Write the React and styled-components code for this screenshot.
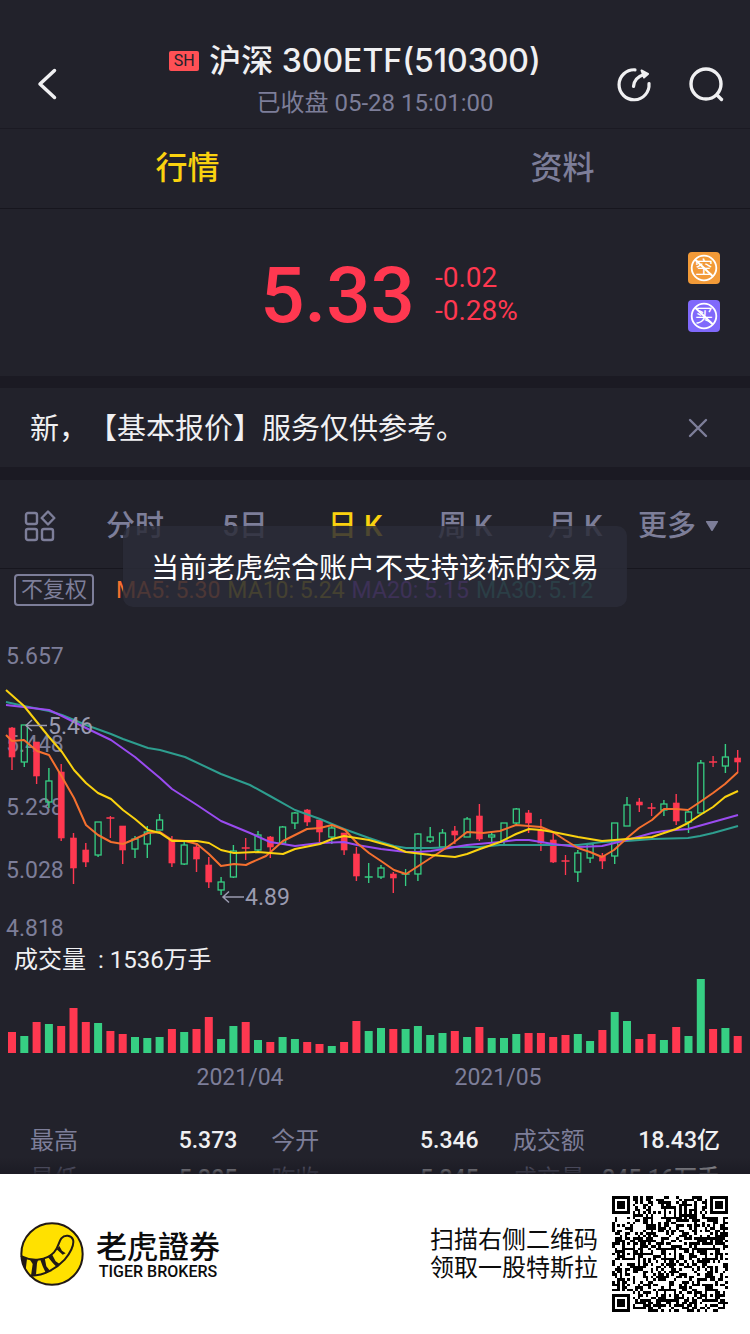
import React from "react";
import styled, { createGlobalStyle } from "styled-components";

const color = {
  bg: "#22222b",
  gap: "#1b1a23",
  muted: "#7d7e99",
  text: "#f0f0f2",
  yellow: "#fad20f",
  red: "#ff3850",
  green: "#36cf83",
  orange: "#f5702f",
  purple: "#9a4bf0",
  teal: "#2e9e8f",
};

const GlobalStyle = createGlobalStyle`
  *, *::before, *::after { box-sizing: border-box; }
  body {
    margin: 0;
    background: ${color.bg};
    color: ${color.text};
    font-family: Roboto, "Noto Sans CJK SC", sans-serif;
  }
  button { font: inherit; color: inherit; background: none; border: 0; padding: 0; cursor: pointer; }
  h1, p, dl, dt, dd { margin: 0; font-weight: 400; }
  svg { display: block; }
`;

const Page = styled.div`
  min-height: 100vh;
  display: flex;
  flex-direction: column;
`;

const Header = styled.header`
  display: grid;
  grid-template-columns: 130px 1fr 130px;
  align-items: center;
  padding-top: 40px;
  height: 129px;
  border-bottom: 1px solid ${color.gap};
`;

const BackButton = styled.button`
  justify-self: start;
  padding-left: 36px;
`;

const HeaderActions = styled.div`
  display: flex;
  justify-content: flex-end;
  gap: 36px;
  padding-right: 26px;
`;

const Heading = styled.div`
  display: flex;
  flex-direction: column;
  align-items: center;
  gap: 8px;
  padding-bottom: 10px;
  white-space: nowrap;
`;

const TitleRow = styled.div`
  display: flex;
  align-items: center;
  gap: 10px;
  margin-right: 40px;
`;

const Exchange = styled.span`
  background: #ff5055;
  color: ${color.bg};
  font-size: 16px;
  line-height: 20px;
  width: 30px;
  text-align: center;
  border-radius: 2px;
`;

const Title = styled.h1`
  font-family: Inter, "Noto Sans CJK SC", sans-serif;
  font-size: 32px;
  line-height: 40px;
  font-weight: 500;
`;

const Status = styled.p`
  color: ${color.muted};
  font-size: 24px;
  line-height: 28px;
`;

const Tabs = styled.nav`
  display: grid;
  grid-template-columns: 1fr 1fr;
  height: 80px;
  border-bottom: 1px solid #17161e;
`;

const Tab = styled.button`
  && { color: ${(p) => (p.$active ? color.yellow : color.muted)}; }
  padding-bottom: 8px;
  font-size: 32px;
  font-weight: 500;
`;

const Quote = styled.section`
  display: grid;
  grid-template-columns: 1fr auto 1fr;
  align-items: center;
  height: 167px;
  padding: 0 30px;
  color: ${color.red};
`;

const PriceGroup = styled.div`
  grid-column: 2;
  display: flex;
  align-items: center;
  gap: 20px;
  margin-left: 28px;
  padding-top: 6px;
`;

const Price = styled.strong`
  font-size: 78px;
  line-height: 88px;
  font-weight: 500;
`;

const Change = styled.div`
  display: flex;
  flex-direction: column;
  padding-bottom: 3px;
  font-size: 28px;
  line-height: 33px;
`;

const Restrictions = styled.div`
  justify-self: end;
  display: flex;
  flex-direction: column;
  gap: 16px;
  padding-bottom: 1px;
`;

const Notice = styled.section`
  display: flex;
  align-items: center;
  justify-content: space-between;
  height: 104px;
  padding: 0 42px 0 30px;
  border: solid ${color.gap};
  border-width: 12px 0 13px;
  font-size: 29px;
  line-height: 40px;
`;

const NoticeText = styled.p`
  padding-top: 3px;
  text-spacing-trim: space-all;
`;

const ChartPanel = styled.section`
  position: relative;
`;

const Periods = styled.nav`
  display: grid;
  grid-template-columns: 80px repeat(5, 1fr) 120px;
  align-items: center;
  height: 89px;
  border-bottom: 1px solid #17161e;
  padding-top: 4px;
`;

const Period = styled.button`
  && { color: ${(p) => (p.$active ? color.yellow : color.muted)}; }
  display: flex;
  align-items: center;
  justify-content: ${(p) => (p.$start ? "flex-start" : "center")};
  gap: 9px;
  padding-left: ${(p) => (p.$start ? "8px" : "0")};
  font-size: 29px;
  line-height: 40px;
  font-weight: 500;
  white-space: nowrap;
`;

const LayoutButton = styled.button`
  padding-left: 24px;
`;

const Indicators = styled.div`
  display: flex;
  align-items: center;
  padding: 5px 14px 0;
  height: 37px;
  gap: 7px;
  font-size: 23px;
  white-space: nowrap;
`;

const Adjust = styled.button`
  && { color: ${color.muted}; border: 2px solid ${color.muted}; }
  width: 80px;
  height: 32px;
  border-radius: 4px;
  font-size: 22px;
  line-height: 28px;
  margin-right: 15px;
`;

const Average = styled.span`
  color: ${(p) => p.$color};
`;

const Toast = styled.div`
  position: absolute;
  top: 46px;
  left: 50%;
  transform: translateX(-50%);
  padding: 23px 28px 18px;
  border-radius: 10px;
  background: rgba(43, 44, 56, 0.84);
  color: #fff;
  font-size: 28px;
  line-height: 40px;
  white-space: nowrap;
`;

const Plot = styled.svg`
  width: 100%;
  height: auto;
  font-size: 23px;
`;

const VolumeLabel = styled.p`
  padding-left: 14px;
  font-size: 24px;
  line-height: 32px;
`;

const Stats = styled.dl`
  position: relative;
  flex: 1 1 0;
  min-height: 66px;
  overflow: hidden;
  display: grid;
  grid-template-columns: repeat(3, 1fr);
  grid-auto-rows: 38px;
  column-gap: 34px;
  padding: 20px 30px 0;
  &::after {
    content: "";
    position: absolute;
    inset: auto 0 0;
    height: 16px;
    background: linear-gradient(rgba(27, 26, 35, 0), rgba(27, 26, 35, 0.9));
  }
`;

const Stat = styled.div`
  display: flex;
  justify-content: space-between;
  align-items: center;
  font-size: 24px;
  line-height: 38px;
  white-space: nowrap;
  dt { color: ${color.muted}; }
  dd { font-size: 23px; font-weight: 500; }
`;

const Banner = styled.footer`
  display: flex;
  align-items: center;
  height: 160px;
  padding: 0 22px 0 20px;
  background: #fff;
  color: #0c0c0c;
`;

const Brand = styled.div`
  display: flex;
  align-items: center;
  gap: 12px;
  margin-right: auto;
`;

const BrandText = styled.div`
  display: flex;
  flex-direction: column;
  align-items: center;
`;

const BrandName = styled.span`
  font-family: "Noto Sans CJK TC", sans-serif;
  font-size: 31px;
  line-height: 36px;
  font-weight: 500;
`;

const BrandLatin = styled.span`
  font-size: 16px;
  line-height: 18px;
  font-weight: 500;
`;

const Invite = styled.p`
  font-size: 24px;
  line-height: 28px;
  margin-right: 14px;
`;

// kind, high, body top, body bottom, low
const candles = [
  ["R", 727, 728, 757, 770], ["G", 725, 725, 762, 767], ["R", 742, 742, 776, 784],
  ["G", 768, 781, 802, 808], ["R", 764, 772, 838, 841], ["R", 833, 838, 868, 884],
  ["R", 843, 850, 862, 867], ["G", 822, 822, 855, 857], ["R", 816, 818, 819, 838],
  ["R", 826, 826, 850, 864], ["G", 836, 839, 849, 858], ["G", 826, 832, 844, 858],
  ["G", 814, 820, 830, 830], ["R", 836, 840, 863, 867], ["G", 842, 845, 864, 865],
  ["R", 843, 847, 859, 872], ["R", 857, 865, 882, 888], ["G", 877, 882, 890, 895],
  ["G", 845, 851, 877, 878], ["R", 838, 848, 849, 860], ["G", 831, 835, 850, 853],
  ["R", 836, 837, 847, 858], ["G", 826, 827, 843, 845], ["G", 812, 813, 823, 829],
  ["R", 809, 810, 822, 826], ["R", 820, 820, 832, 842], ["G", 824, 828, 837, 844],
  ["R", 833, 833, 850, 855], ["R", 847, 854, 876, 881], ["G", 863, 877, 878, 883],
  ["G", 865, 868, 877, 879], ["R", 872, 874, 878, 893], ["G", 869, 874, 875, 886],
  ["G", 833, 834, 874, 881], ["G", 827, 837, 841, 843], ["G", 829, 833, 847, 847],
  ["R", 826, 831, 835, 844], ["G", 817, 819, 837, 837], ["R", 804, 816, 839, 841],
  ["G", 833, 835, 837, 843], ["G", 823, 823, 841, 845], ["G", 808, 809, 823, 826],
  ["R", 810, 813, 823, 833], ["R", 819, 830, 843, 851], ["R", 833, 840, 862, 863],
  ["R", 855, 861, 862, 875], ["G", 850, 853, 872, 882], ["G", 843, 844, 858, 863],
  ["R", 853, 856, 861, 869], ["G", 823, 823, 856, 864], ["G", 797, 805, 826, 826],
  ["R", 798, 802, 805, 812], ["R", 803, 808, 809, 816], ["G", 800, 804, 810, 816],
  ["R", 794, 803, 821, 825], ["G", 811, 812, 822, 833], ["G", 760, 763, 813, 813],
  ["R", 756, 762, 763, 767], ["G", 744, 757, 766, 773], ["R", 750, 758, 762, 772],
];

const volumes = [
  21, 17, 31, 29, 27, 45, 31, 30, 22, 19, 16, 15, 16, 24, 21, 24, 36, 14, 27, 31,
  13, 11, 16, 14, 11, 9, 7, 11, 32, 22, 25, 24, 24, 27, 18, 20, 22, 16, 26, 15,
  15, 19, 20, 20, 16, 18, 19, 12, 23, 41, 32, 14, 19, 13, 26, 17, 74, 24, 25, 17,
];
const volumeKinds = "RGRGRRRGRRGGGRGRRGGRGRGGRRGRRGGRGGGGRGRGGGRRRRGGRGGRRGRGGRGR";

const averages = [
  [color.teal, "6,702 24,706 49,711 62,715 86,725 111,734 123,739 148,748 160,750 185,757 221,774 250,785 270,796 295,810 320,819 344,829 369,838 381,842 394,846 406,848 431,848 455,847 480,847 500,845 529,845 578,845 602,842 627,841 652,839 688,838 700,836 713,833 738,826"],
  [color.purple, "6,705 49,710 62,716 86,728 111,740 135,757 148,768 160,778 172,789 197,805 209,813 221,821 250,833 270,842 283,844 295,846 320,843 344,842 357,845 381,849 406,852 418,852 431,851 455,847 467,845 500,842 516,840 529,840 553,844 578,847 602,846 627,840 652,833 664,831 688,829 713,822 738,815"],
  [color.orange, "6,735 12,741 24,740 37,751 49,755 62,777 74,798 86,825 98,835 111,842 123,844 135,839 148,833 160,832 172,840 185,841 197,844 209,854 221,866 234,864 246,865 250,863 266,856 283,841 307,829 320,828 332,825 345,830 357,843 369,853 381,861 394,870 406,874 423,863 443,850 453,843 467,832 483,833 500,831 516,825 541,827 553,832 565,840 578,848 590,852 602,857 614,850 627,838 639,828 652,820 664,809 676,809 688,810 700,802 713,793 725,784 738,772"],
  [color.yellow, "6,690 24,706 49,737 62,752 74,770 86,783 98,793 111,799 123,810 135,819 148,830 160,833 172,841 197,841 209,843 221,850 234,853 258,852 283,854 295,849 320,844 332,839 344,836 369,840 394,847 406,852 431,855 455,857 467,854 480,849 500,842 516,834 529,829 541,830 553,832 578,837 602,841 627,839 652,837 664,833 676,829 688,823 700,815 713,807 725,797 738,791"],
];

const axis = [["5.657", 664], ["5.448", 752], ["5.238", 815], ["5.028", 878], ["4.818", 936]];
const months = [["2021/04", 240], ["2021/05", 498]];
const tint = (kind) => (kind === "R" ? color.red : color.green);
const slotX = (i) => 12 + i * 12.3;

function Candle({ x, data: [kind, high, top, bottom, low] }) {
  const c = tint(kind);
  if (bottom - top < 2)
    return <path d={`M${x} ${high}V${low}M${x - 4} ${top}H${x + 4}`} stroke={c} strokeWidth="1.3" fill="none" />;
  return (
    <g stroke={c} strokeWidth="1.4" fill={kind === "R" ? c : "none"}>
      <path d={`M${x} ${high}V${top}M${x} ${bottom}V${low}`} />
      <rect x={x - 3} y={top} width="6" height={bottom - top} strokeWidth={kind === "R" ? 0.6 : 1.3} />
    </g>
  );
}

function PriceChart() {
  return (
    <Plot viewBox="0 606 750 338" role="img" aria-label="日K线图">
      <g fill={color.muted}>
        {axis.map(([label, y]) => <text key={label} x="6" y={y}>{label}</text>)}
      </g>
      {candles.map((d, i) => <Candle key={i} x={slotX(i)} data={d} />)}
      {averages.map(([c, points]) => (
        <polyline key={c} points={points} fill="none" stroke={c} strokeWidth="2" strokeLinejoin="round" />
      ))}
      <g fill="#9a9bb0">
        <path d="M47 725.500H26M32 720l-6 5.500 6 5.500M244 897H223M229 891.500l-6 5.500 6 5.500" fill="none" stroke="#9a9bb0" strokeWidth="1.500" />
        <text x="48" y="734">5.46</text>
        <text x="245" y="905">4.89</text>
      </g>
    </Plot>
  );
}

function VolumeChart() {
  return (
    <Plot viewBox="0 976 750 126" role="img" aria-label="成交量图">
      {volumes.map((h, i) => (
        <rect key={i} x={slotX(i) - 4} y={1053 - h} width="8" height={h} fill={tint(volumeKinds[i])} />
      ))}
      <g fill={color.muted} textAnchor="middle">
        {months.map(([label, x]) => <text key={label} x={x} y="1085">{label}</text>)}
      </g>
    </Plot>
  );
}

const QR_SIZE = 45;

function qrModule(x, y) {
  const corners = [[0, 0], [QR_SIZE - 7, 0], [0, QR_SIZE - 7]];
  for (const [cx, cy] of corners) {
    const d = Math.max(Math.abs(x - cx - 3), Math.abs(y - cy - 3));
    if (d <= 4) return d !== 4 && d !== 2;
  }
  for (const [ax, ay] of [[22, 6], [6, 22], [22, 22], [38, 22], [22, 38], [38, 38]]) {
    const d = Math.max(Math.abs(x - ax), Math.abs(y - ay));
    if (d <= 2) return d !== 1;
  }
  if (x === 6) return y % 2 === 0;
  if (y === 6) return x % 2 === 0;
  let h = Math.imul(x + 11, 374761393) ^ Math.imul(y + 5, 668265263);
  h = Math.imul(h ^ (h >>> 13), 1274126177);
  return ((h ^ (h >>> 16)) & 1) === 1;
}

function QrCode() {
  let d = "";
  for (let y = 0; y < QR_SIZE; y++)
    for (let x = 0; x < QR_SIZE; x++) if (qrModule(x, y)) d += `M${x} ${y}h1v1h-1z`;
  return (
    <svg width="116" height="116" viewBox={`0 0 ${QR_SIZE} ${QR_SIZE}`} shapeRendering="crispEdges" role="img" aria-label="二维码">
      <path d={d} fill="#000" />
    </svg>
  );
}

function Restriction({ char, fill }) {
  return (
    <svg width="32" height="32" viewBox="0 0 32 32">
      <rect width="32" height="32" rx="4" fill={fill} />
      <text x="16" y="22" fontSize="18" fill="#fff" textAnchor="middle">{char}</text>
      <circle cx="16" cy="16" r="12.300" fill="none" stroke="#fff" strokeWidth="1.800" />
      <path d="M7 7.500L25 24.500" stroke="#fff" strokeWidth="2" />
    </svg>
  );
}

function TigerLogo() {
  return (
    <svg width="64" height="64" viewBox="59 65 192 192">
      <circle cx="155" cy="161" r="92" fill="#ffe100" stroke="#211915" strokeWidth="6" />
      <path d="M64 168C95 184 138 181 161 156C176 140 174 126 183 114C193 102 213 104 218 118C223 134 208 161 193 178C170 203 132 227 91 226" fill="none" stroke="#211915" strokeWidth="6" strokeLinecap="round" />
      <path d="M63 169L80 175L76 209L66 190ZM88 177H114L110 189L107 223L92 226L97 191ZM119 176L133 172L138 198L149 211L137 219L127 198ZM142 169L154 160L166 183L178 191L169 200L158 189ZM169 147L177 137L185 151L196 159L187 163Z" fill="#211915" />
    </svg>
  );
}

const stats = [
  ["最高", "5.373"], ["今开", "5.346"], ["成交额", "18.43亿"],
  ["最低", "5.305"], ["昨收", "5.345"], ["成交量", "345.16万手"],
];

export default function App() {
  return (
    <Page>
      <GlobalStyle />
      <Header>
        <BackButton aria-label="返回">
          <svg width="22" height="34" viewBox="0 0 22 34" fill="none" stroke={color.text} strokeWidth="3.500" strokeLinecap="round" strokeLinejoin="round">
            <path d="M18.500 3.500L4 17l14.500 13.500" />
          </svg>
        </BackButton>
        <Heading>
          <TitleRow>
            <Exchange>SH</Exchange>
            <Title>沪深 300ETF(510300)</Title>
          </TitleRow>
          <Status>已收盘 05-28 15:01:00</Status>
        </Heading>
        <HeaderActions>
          <button aria-label="分享">
            <svg width="36" height="36" viewBox="0 0 36 36" fill="none" stroke={color.text} strokeWidth="3.200" strokeLinecap="round" strokeLinejoin="round">
              <path d="M19 3.800A15 15 0 1 0 33 17.500" />
              <path d="M17.500 20.500C18 14.500 21.500 10.500 28 8.500" />
              <path d="M25.500 4.500L32 8L28 11.500Z" fill={color.text} strokeWidth="2" />
            </svg>
          </button>
          <button aria-label="搜索">
            <svg width="36" height="36" viewBox="0 0 36 36" fill="none" stroke={color.text} strokeWidth="3.400" strokeLinecap="round">
              <circle cx="18" cy="18" r="15" />
              <path d="M29 29L33.500 33.500" />
            </svg>
          </button>
        </HeaderActions>
      </Header>

      <Tabs>
        <Tab $active>行情</Tab>
        <Tab>资料</Tab>
      </Tabs>

      <Quote>
        <PriceGroup>
          <Price>5.33</Price>
          <Change>
            <span>-0.02</span>
            <span>-0.28%</span>
          </Change>
        </PriceGroup>
        <Restrictions>
          <Restriction char="空" fill="#f29a38" />
          <Restriction char="买" fill="#8069fb" />
        </Restrictions>
      </Quote>

      <Notice>
        <NoticeText>新，【基本报价】服务仅供参考。</NoticeText>
        <button aria-label="关闭">
          <svg width="20" height="20" viewBox="0 0 20 20" stroke={color.muted} strokeWidth="2.400" strokeLinecap="round">
            <path d="M2 2L18 18M18 2L2 18" />
          </svg>
        </button>
      </Notice>

      <ChartPanel>
        <Periods>
          <LayoutButton aria-label="图表布局">
            <svg width="32" height="32" viewBox="0 0 32 32" fill="none" stroke={color.muted} strokeWidth="2.400" strokeLinejoin="round">
              <rect x="2" y="3" width="11" height="11" rx="2" />
              <path d="M24 1.500L30.300 8L24 14.500L17.700 8Z" />
              <rect x="2" y="19" width="11" height="11" rx="2" />
              <rect x="18" y="19" width="11" height="11" rx="2" />
            </svg>
          </LayoutButton>
          <Period>分时</Period>
          <Period>5日</Period>
          <Period $active>日 K</Period>
          <Period>周 K</Period>
          <Period>月 K</Period>
          <Period $start>
            更多
            <svg width="14" height="12" viewBox="0 0 14 12" fill="currentColor">
              <path d="M1.500 1H12.500Q13.500 1 13 2L7.800 10.500Q7 11.500 6.200 10.500L1 2Q.5 1 1.500 1Z" />
            </svg>
          </Period>
        </Periods>
        <Indicators>
          <Adjust>不复权</Adjust>
          <Average $color={color.orange}>MA5: 5.30</Average>
          <Average $color="#c9ab12">MA10: 5.24</Average>
          <Average $color={color.purple}>MA20: 5.15</Average>
          <Average $color={color.teal}>MA30: 5.12</Average>
        </Indicators>
        <PriceChart />
        <VolumeLabel>成交量&nbsp; : 1536万手</VolumeLabel>
        <VolumeChart />
        <Toast role="status">当前老虎综合账户不支持该标的交易</Toast>
      </ChartPanel>

      <Stats>
        {stats.map(([label, value]) => (
          <Stat key={label}>
            <dt>{label}</dt>
            <dd>{value}</dd>
          </Stat>
        ))}
      </Stats>

      <Banner>
        <Brand>
          <TigerLogo />
          <BrandText>
            <BrandName>老虎證券</BrandName>
            <BrandLatin>TIGER BROKERS</BrandLatin>
          </BrandText>
        </Brand>
        <Invite>
          扫描右侧二维码
          <br />
          领取一股特斯拉
        </Invite>
        <QrCode />
      </Banner>
    </Page>
  );
}
